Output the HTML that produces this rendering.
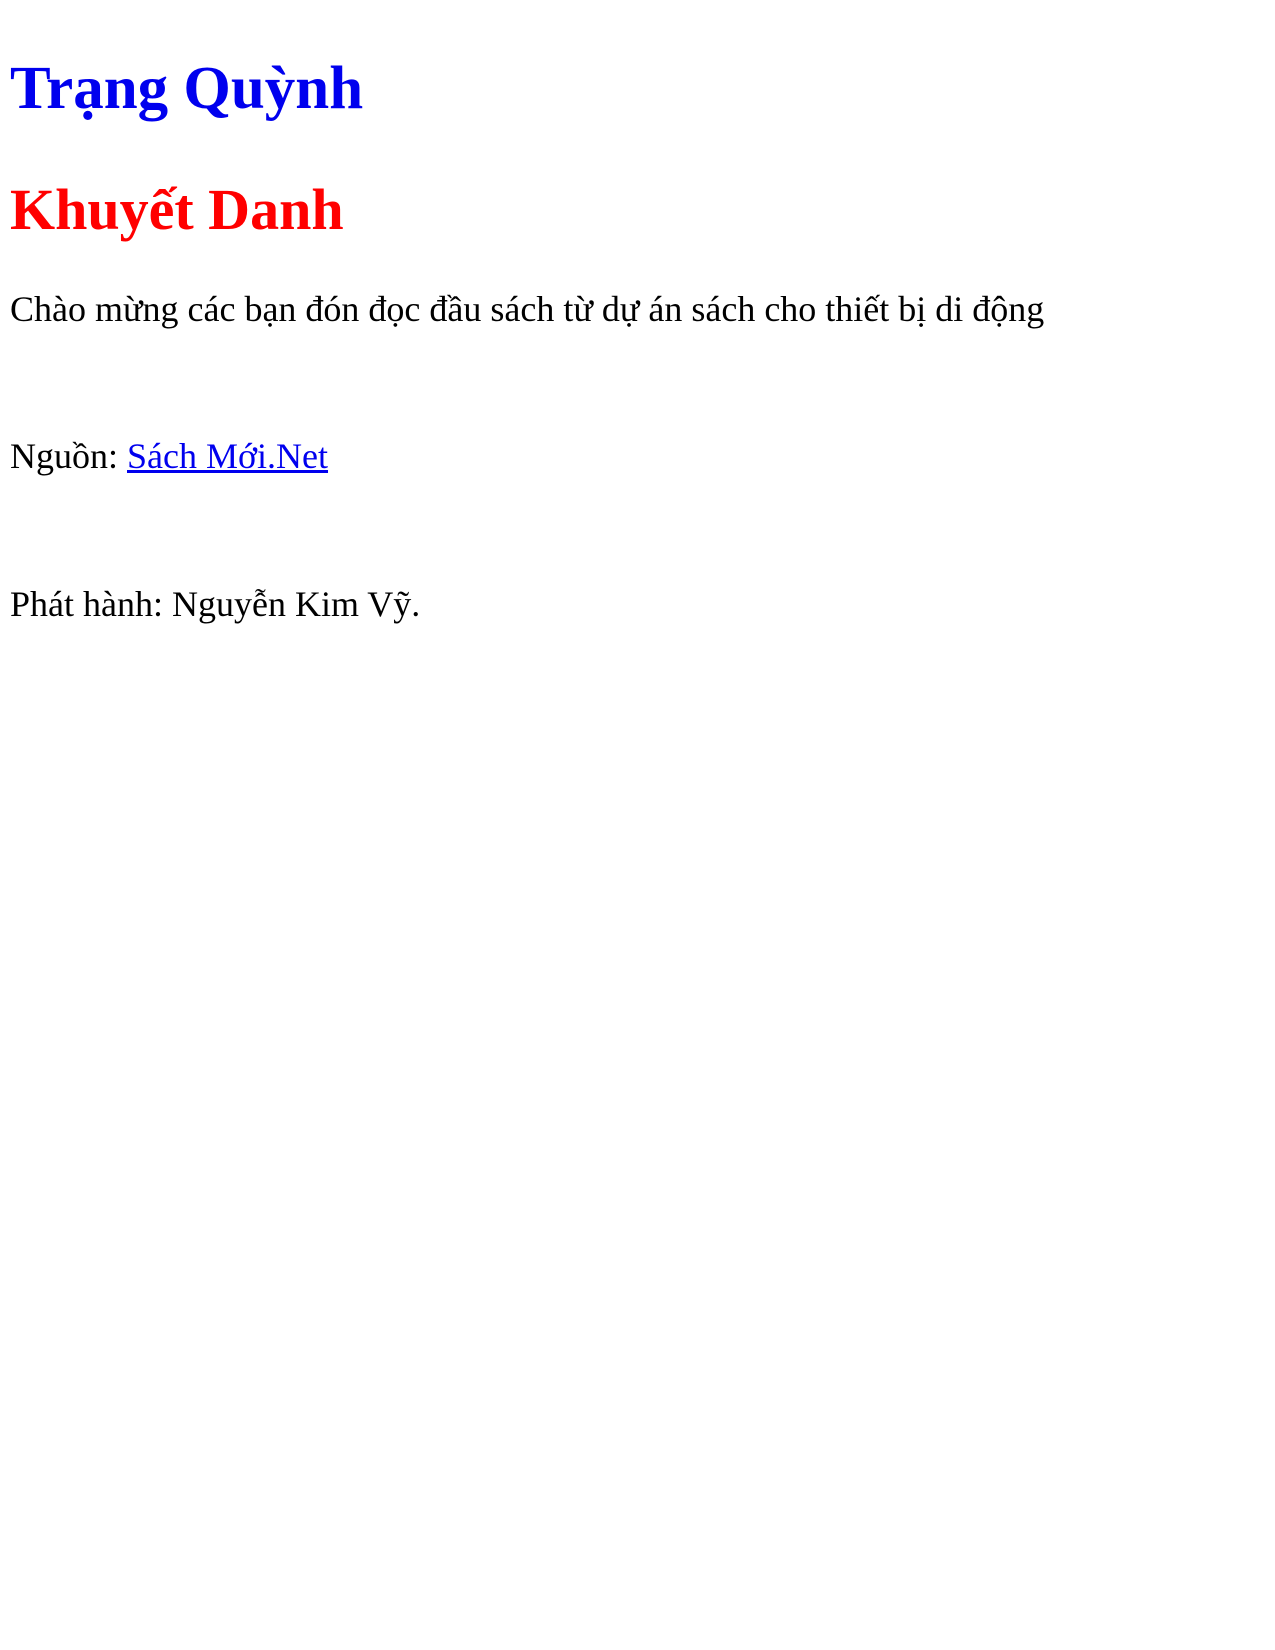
<!DOCTYPE html>
<html><head><meta charset="utf-8"><style>
html,body{margin:0;padding:0;background:#fff;width:1275px;height:1650px;overflow:hidden}
body{font-family:"Liberation Serif",serif;position:relative}
div{position:absolute;left:10px;line-height:1;white-space:nowrap}
.t{top:58px;font-size:61px;font-weight:bold;color:#0000ee}
.a{top:181px;font-size:58px;font-weight:bold;color:#ff0000}
.p{font-size:36px;color:#000}
a{color:#0000ee;text-decoration:underline}
</style></head><body>
<div class="t">Trạng Quỳnh</div>
<div class="a">Khuyết Danh</div>
<div class="p" style="top:291px">Chào mừng các bạn đón đọc đầu sách từ dự án sách cho thiết bị di động</div>
<div class="p" style="top:438px">Nguồn: <a>Sách Mới.Net</a></div>
<div class="p" style="top:586px">Phát hành: Nguyễn Kim Vỹ.</div>
</body></html>
